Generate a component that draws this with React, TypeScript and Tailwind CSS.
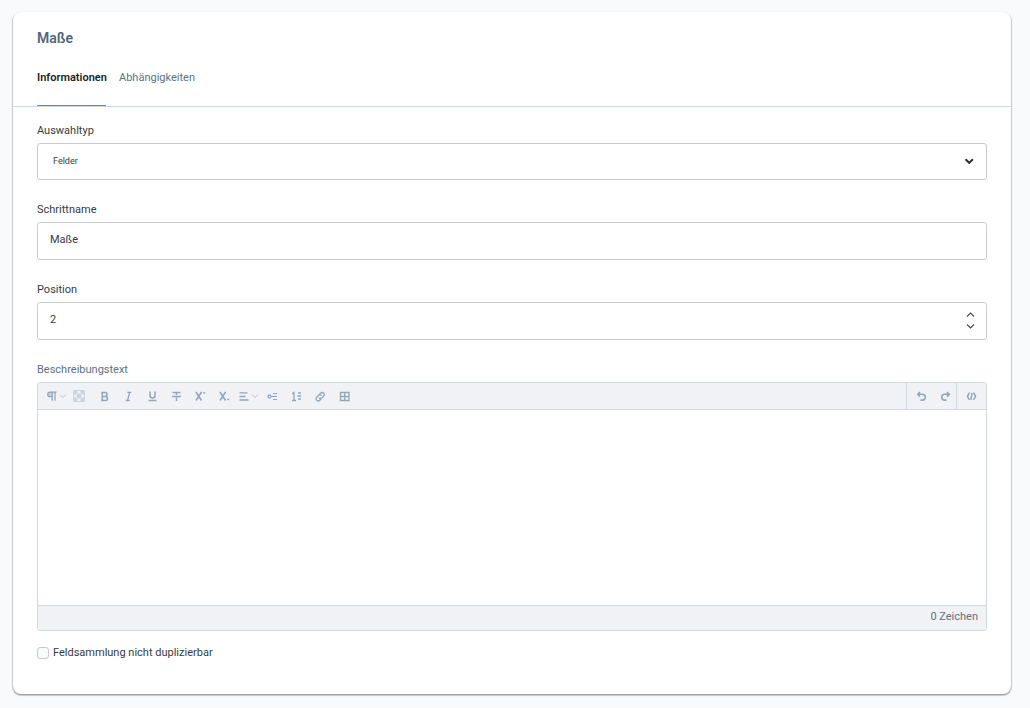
import { useState } from "react";
import type { ReactNode } from "react";

function Icon({ children, className = "h-3 w-3" }: { children: ReactNode; className?: string }) {
  return (
    <svg className={`shrink-0 ${className}`} viewBox="0 0 12 12" fill="none" stroke="currentColor" strokeWidth="1.3" aria-hidden="true">
      {children}
    </svg>
  );
}

function SmallChevron() {
  return (
    <svg className="h-2 w-2 shrink-0 text-[#bcc8d2]" viewBox="0 0 8 8" fill="none" stroke="currentColor" aria-hidden="true">
      <path d="M1 2.500 4 5.500l3-3" />
    </svg>
  );
}

const formatTools = [
  {
    label: "Fett",
    icon: <path d="M3.200 2.500h3.800a2 2 0 0 1 0 4H4.200h3.300a2 2 0 0 1 0 4H3.200M4.300 2.500v8" strokeWidth="1.600" />,
  },
  { label: "Kursiv", icon: <path d="M5.300 2.300h4M3.700 10.500h4M7.700 2.300 5.500 10.500" /> },
  { label: "Unterstrichen", icon: <path d="M4 1.500v4a2.500 2.500 0 0 0 5 0v-4M2.500 10.500h8" strokeWidth="1.500" /> },
  { label: "Durchgestrichen", icon: <path d="M2.500 2.500h8M2 6.500h9M6.500 2.500v2.500M6.500 7.500v3.500" strokeWidth="1.500" /> },
  { label: "Hochgestellt", icon: <path d="m2 2 5.500 8.500M7.500 2 2 10.500M9.200 3h2" strokeWidth="1.600" /> },
  { label: "Tiefgestellt", icon: <path d="m2 2 5.500 8.500M7.500 2 2 10.500M9.200 9.500h2" strokeWidth="1.600" /> },
];

const insertTools = [
  {
    label: "Aufzählung",
    icon: (
      <>
        <circle cx="3.500" cy="6.500" r="1.500" />
        <path d="M7 3.500h4M5.500 6.500H11M7 9.500h4" strokeWidth="1.200" />
      </>
    ),
  },
  { label: "Nummerierung", icon: <path d="m2 3.700 2-1.200v8M2 10.500h4M8 3h3M7.500 6H11M8 9h3" strokeWidth="1.300" /> },
  {
    label: "Link",
    icon: (
      <path d="M5.200 4.500 6.700 3.100a2.100 2.100 0 0 1 3 3L8 7.800a2.100 2.100 0 0 1-3-.2M7.200 8.800 5.700 10.200a2.100 2.100 0 0 1-3-3l1.700-1.700a2.100 2.100 0 0 1 3 .2" />
    ),
  },
  { label: "Tabelle", icon: <path d="M2.500 2.500h8.500v8H2.500zM2.500 6.500H11M6.700 2.500v8" /> },
];

function ToolButton({ label, children, className = "w-6" }: { label: string; children: ReactNode; className?: string }) {
  return (
    <button type="button" title={label} aria-label={label} className={`flex h-full items-center justify-center ${className}`}>
      {children}
    </button>
  );
}

function Toolbar() {
  return (
    <div className="flex h-[27px] rounded-t-[3px] border-b border-[#d1d9e0] bg-[#f0f2f5] text-[#94a6b8]">
      <div className="flex flex-1 items-center pl-1">
        <ToolButton label="Absatz" className="w-[25px] gap-px pl-1">
          <Icon>
            <path d="M10.500 2.200H4a2.200 2.200 0 0 0 0 4.400h2M6.200 2v8.800M9 2v8.800" />
            <path d="M4 2.500h2v3.800H4a1.900 1.900 0 0 1 0-3.800z" fill="currentColor" fillOpacity="0.4" stroke="none" />
          </Icon>
          <SmallChevron />
        </ToolButton>
        <ToolButton label="Textfarbe" className="mr-px w-6">
          <Icon>
            <rect width="12" height="12" rx="1.500" fill="#ccd5dc" stroke="none" />
            <path
              d="M4.500 1h3v2.500h-3zM1 4.500h2.500v3H1zM8.500 4.500H11v3H8.500zM4.500 8.500h3V11h-3zM3.500 3.500h1v1h-1zM7.500 3.500h1v1h-1zM3.500 7.500h1v1h-1zM7.500 7.500h1v1h-1z"
              fill="#f0f2f5"
              stroke="none"
            />
          </Icon>
        </ToolButton>
        {formatTools.map((tool) => (
          <ToolButton key={tool.label} label={tool.label}>
            <Icon>{tool.icon}</Icon>
          </ToolButton>
        ))}
        <ToolButton label="Ausrichtung" className="w-6 gap-px">
          <Icon>
            <path d="M1.500 2.800h8M1.500 6.500h6M1.500 10h9" />
          </Icon>
          <SmallChevron />
        </ToolButton>
        {insertTools.map((tool) => (
          <ToolButton key={tool.label} label={tool.label}>
            <Icon>{tool.icon}</Icon>
          </ToolButton>
        ))}
      </div>
      <div className="flex items-center gap-0.5 border-l border-[#d1d9e0] pl-[3px]">
        <ToolButton label="Rückgängig" className="w-[22px]">
          <Icon>
            <path d="M5 2 2.800 4.300 5 6.600M3 4.300h4.300a2.900 2.900 0 0 1 0 5.800H5.500" strokeWidth="1.600" />
          </Icon>
        </ToolButton>
        <ToolButton label="Wiederholen" className="w-[22px]">
          <Icon>
            <path d="m8 2 2.200 2.300L8 6.600M10 4.300H5.700a2.900 2.900 0 0 0 0 5.800h1.800" strokeWidth="1.600" />
          </Icon>
        </ToolButton>
      </div>
      <div className="flex items-center border-l border-[#d1d9e0] pr-px">
        <ToolButton label="Quelltext" className="w-7">
          <Icon>
            <path d="M4.800 3.300H4L2.500 6.300 4 9.300h.8M8.200 3.300H9l1.500 3L9 9.300h-.8M7.100 2.800 5.900 9.800" strokeWidth="1.500" />
          </Icon>
        </ToolButton>
      </div>
    </div>
  );
}

export default function App() {
  const [name, setName] = useState("Maße");
  const [position, setPosition] = useState(2);

  return (
    <main className="min-h-screen bg-[#f9fafb] py-3 pr-[19px] pl-[13px] font-['Roboto',sans-serif] text-[11px] leading-4 text-[#363b42]">
      <section className="rounded-lg bg-white pb-[33px] shadow-[0_1px_0_1px_rgba(0,0,0,0.14),0_1px_1px_rgba(0,0,0,0.2),0_1px_3px_rgba(0,0,0,0.1)]">
        <header className="border-b border-[#d1d9e0] px-6 pt-4">
          <h1 className="text-sm leading-5 font-semibold text-[#52667a]">Maße</h1>
          <nav className="mt-[22px] flex gap-[13px]">
            <a href="#informationen" className="w-[69px] border-b border-[#189eff] pb-[19px] font-semibold whitespace-nowrap text-[#1a1f25]">
              Informationen
            </a>
            <a href="#abhaengigkeiten" className="text-[#607182]">
              Abhängigkeiten
            </a>
          </nav>
        </header>

        <form className="flex flex-col gap-[22px] px-6 pt-4" onSubmit={(e) => e.preventDefault()}>
          <div>
            <label htmlFor="type" className="block">Auswahltyp</label>
            <div className="relative mt-1">
              <select id="type" className="block h-[37px] w-full appearance-none rounded-[3px] border border-[#c8cad0] bg-white pr-8 pb-px pl-[15px] text-[9px]">
                <option>Felder</option>
              </select>
              <svg className="pointer-events-none absolute top-3 right-3 h-3 w-3 text-[#2b3036]" viewBox="0 0 12 12" fill="none" stroke="currentColor" strokeWidth="2" aria-hidden="true">
                <path d="M2.500 4.300 6.200 7.800l3.700-3.500" />
              </svg>
            </div>
          </div>

          <div>
            <label htmlFor="name" className="block">Schrittname</label>
            <input
              id="name"
              type="text"
              value={name}
              onChange={(e) => setName(e.target.value)}
              className="mt-1 block h-[38px] w-full rounded-[3px] border border-[#c8cad0] px-3 pb-1"
            />
          </div>

          <div>
            <label htmlFor="position" className="block">Position</label>
            <div className="relative mt-1">
              <input
                id="position"
                type="text"
                inputMode="numeric"
                value={position}
                onChange={(e) => setPosition(Number(e.target.value) || 0)}
                className="block h-[38px] w-full rounded-[3px] border border-[#c8cad0] pr-8 pb-1 pl-3"
              />
              <div className="absolute inset-y-0 right-2.5 flex flex-col justify-center text-[#44484d]">
                <button type="button" aria-label="Erhöhen" onClick={() => setPosition(position + 1)}>
                  <Icon>
                    <path d="M2 7.500 5.500 4 9 7.500" strokeWidth="1.100" />
                  </Icon>
                </button>
                <button type="button" aria-label="Verringern" onClick={() => setPosition(position - 1)}>
                  <Icon>
                    <path d="M2 3.500 5.500 7 9 3.500" strokeWidth="1.100" />
                  </Icon>
                </button>
              </div>
            </div>
          </div>

          <div>
            <label htmlFor="description" className="block text-[#607182]">Beschreibungstext</label>
            <div className="mt-1 rounded-[3px] border border-[#d1d9e0]">
              <Toolbar />
              <textarea id="description" className="block h-[195px] w-full resize-none p-3 outline-none" />
              <div className="rounded-b-[3px] border-t border-[#d1d9e0] bg-[#f0f2f5] px-2 pt-[3px] pb-[5px] text-right text-[#607182]">0 Zeichen</div>
            </div>
            <div className="mt-[14px] flex items-center gap-1">
              <input
                id="unique"
                type="checkbox"
                className="h-3 w-3 appearance-none rounded-[3px] border border-[#c8cad0] bg-[#f9fafc] checked:bg-[#189eff]"
              />
              <label htmlFor="unique">Feldsammlung nicht duplizierbar</label>
            </div>
          </div>
        </form>
      </section>
    </main>
  );
}
